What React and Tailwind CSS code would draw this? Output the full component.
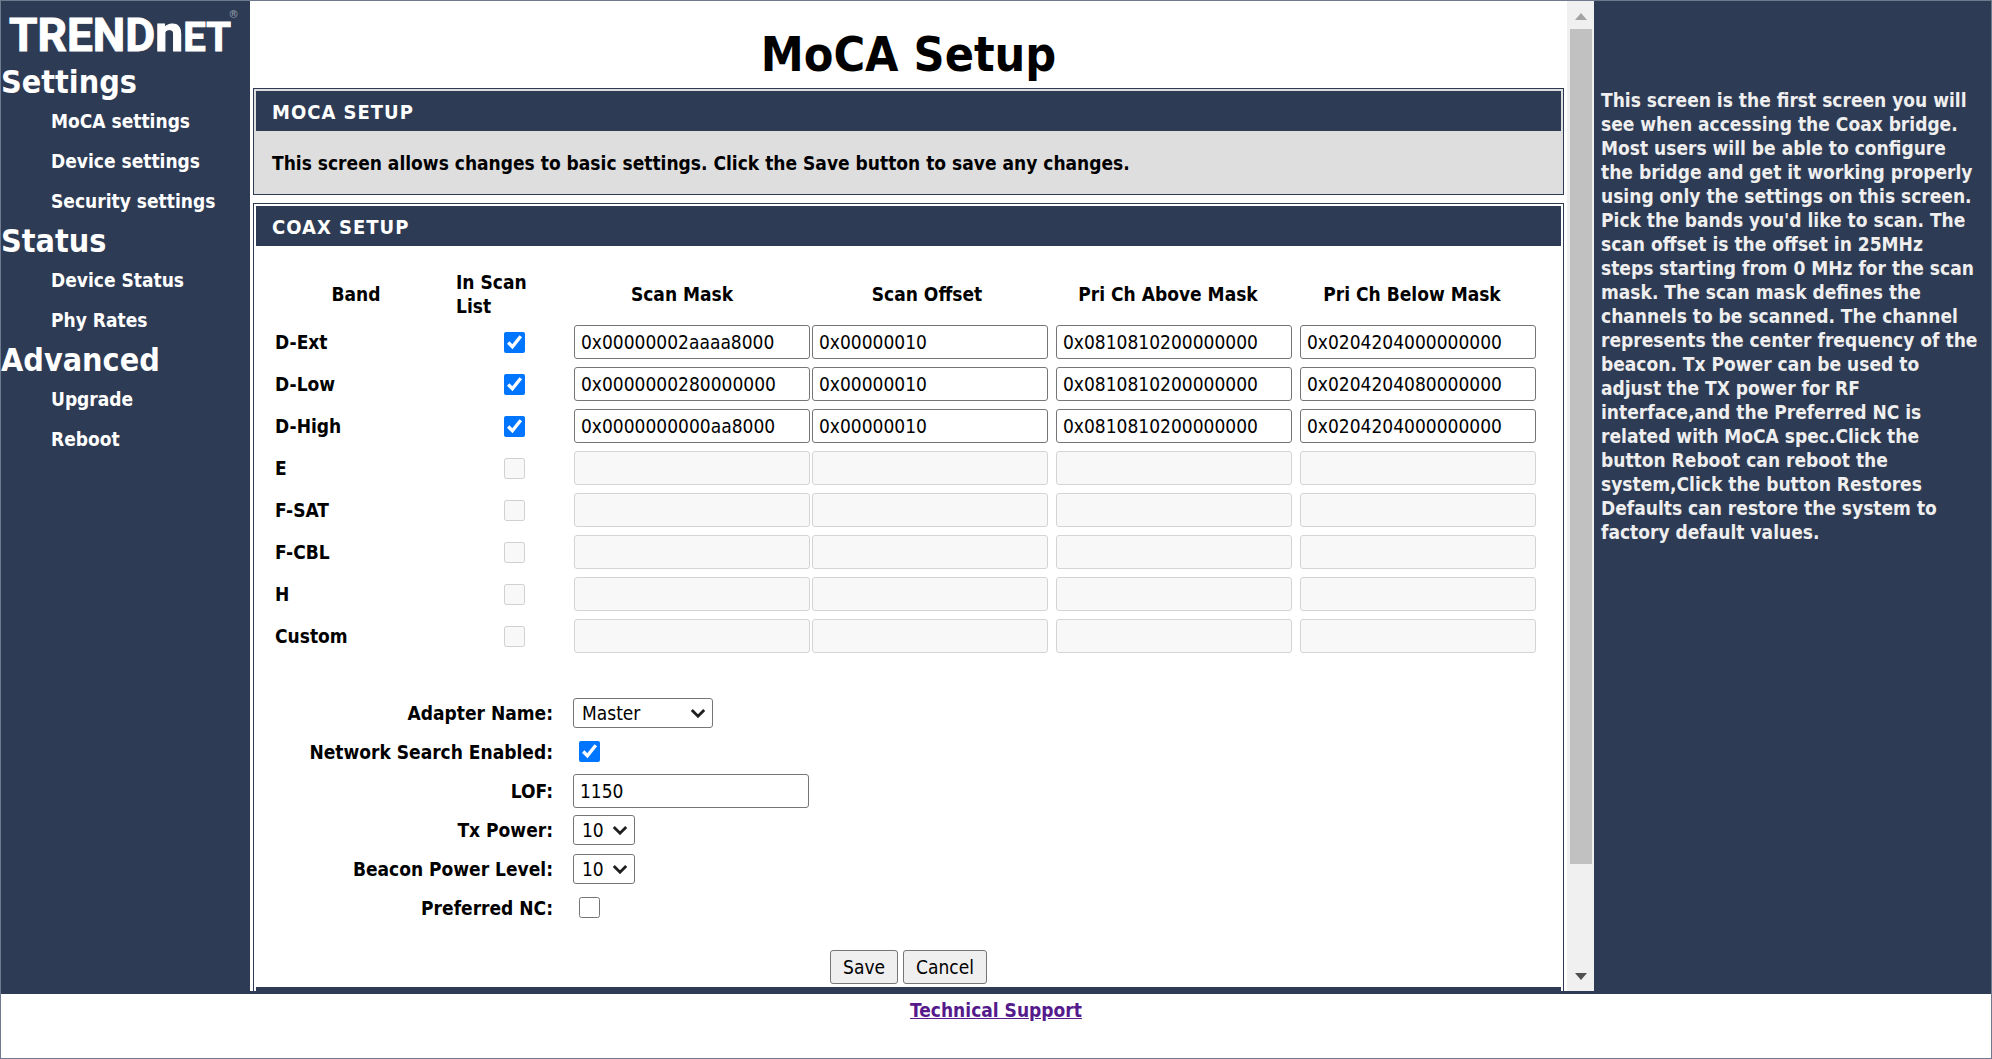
import clsx from "clsx";

const MENU = [
  { title: "Settings", items: ["MoCA settings", "Device settings", "Security settings"] },
  { title: "Status", items: ["Device Status", "Phy Rates"] },
  { title: "Advanced", items: ["Upgrade", "Reboot"] },
];

const COLUMNS = ["Scan Mask", "Scan Offset", "Pri Ch Above Mask", "Pri Ch Below Mask"];

const BANDS = [
  { name: "D-Ext", values: ["0x00000002aaaa8000", "0x00000010", "0x0810810200000000", "0x0204204000000000"] },
  { name: "D-Low", values: ["0x0000000280000000", "0x00000010", "0x0810810200000000", "0x0204204080000000"] },
  { name: "D-High", values: ["0x0000000000aa8000", "0x00000010", "0x0810810200000000", "0x0204204000000000"] },
  { name: "E" },
  { name: "F-SAT" },
  { name: "F-CBL" },
  { name: "H" },
  { name: "Custom" },
];

const HELP = `This screen is the first screen you will
see when accessing the Coax bridge.
Most users will be able to configure
the bridge and get it working properly
using only the settings on this screen.
Pick the bands you'd like to scan. The
scan offset is the offset in 25MHz
steps starting from 0 MHz for the scan
mask. The scan mask defines the
channels to be scanned. The channel
represents the center frequency of the
beacon. Tx Power can be used to
adjust the TX power for RF
interface,and the Preferred NC is
related with MoCA spec.Click the
button Reboot can reboot the
system,Click the button Restores
Defaults can restore the system to
factory default values.`;

function Logo() {
  return (
    <div className="relative flex h-[60px] items-baseline pl-2 font-['Roboto'] font-bold leading-[66px] [-webkit-text-stroke:1px_white]">
      <span className="text-[46px]">TREND</span>
      <span className="text-[50px]">n</span>
      <span className="text-[40px]">ET</span>
      <span className="absolute top-2 right-3 text-[11px] leading-3 text-[#8f98a8] [-webkit-text-stroke:0]">®</span>
    </div>
  );
}

function Sidebar() {
  return (
    <nav className="w-[249px] shrink-0 bg-[#2e3b54] text-white">
      <Logo />
      {MENU.map((group) => (
        <div key={group.title}>
          <h2 className="h-[39px] text-[32px] leading-[42px] font-bold">{group.title}</h2>
          <ul className="pl-[50px]">
            {group.items.map((item) => (
              <li key={item} className="h-[40px] leading-[42px]">
                <a href="#">{item}</a>
              </li>
            ))}
          </ul>
        </div>
      ))}
    </nav>
  );
}

function TextBox({ className, ...props }) {
  return (
    <input
      type="text"
      className={clsx(
        "block h-[34px] w-[236px] rounded-[3px] border border-[#767676] bg-white px-1.5 text-[19px] font-normal text-black disabled:border-[#d4d4d4] disabled:bg-[#f8f8f8]",
        className,
      )}
      {...props}
    />
  );
}

function Picker({ id, options, className }) {
  return (
    <span className={clsx("relative block h-[30px]", className)}>
      <select
        id={id}
        className="h-full w-full appearance-none rounded-[3px] border border-[#767676] bg-white pl-2 text-[19px] font-normal text-black"
      >
        {options.map((o) => (
          <option key={o}>{o}</option>
        ))}
      </select>
      <svg viewBox="0 0 14 9" className="pointer-events-none absolute top-[11px] right-2 h-[9px] w-[14px]">
        <path d="M0.8 1 L7 7.2 L13.2 1" fill="none" stroke="#1f1f1f" strokeWidth="2.8" />
      </svg>
    </span>
  );
}

function Panel({ title, className, children }) {
  return (
    <section className={clsx("border border-[#2e3b54] p-0.5", className)}>
      <h2 className="h-[40px] bg-[#2e3b54] pl-4 text-[20px] leading-[42px] font-bold tracking-wider text-white uppercase">
        {title}
      </h2>
      {children}
    </section>
  );
}

function BandTable() {
  return (
    <table className="mt-[21px] ml-[18px] table-fixed border-collapse">
      <colgroup>
        <col className="w-[164px]" />
        <col className="w-[120px]" />
        <col className="w-[252px]" />
        <col className="w-[238px]" />
        <col className="w-[244px]" />
        <col className="w-[244px]" />
      </colgroup>
      <thead>
        <tr className="h-[54px]">
          <th>Band</th>
          <th className="pr-6 pl-[18px] text-left">In Scan List</th>
          {COLUMNS.map((c) => (
            <th key={c} className="pr-1">{c}</th>
          ))}
        </tr>
      </thead>
      <tbody>
        {BANDS.map(({ name, values }) => (
          <tr key={name} className="h-[42px]">
            <th scope="row" className="pl-px text-left">{name}</th>
            <td className="pl-[66px]">
              <input
                type="checkbox"
                aria-label={`${name} in scan list`}
                defaultChecked={Boolean(values)}
                disabled={!values}
                className="block size-[21px]"
              />
            </td>
            {COLUMNS.map((c, i) => (
              <td key={c}>
                <TextBox aria-label={`${name} ${c}`} defaultValue={values?.[i]} disabled={!values} className="ml-auto" />
              </td>
            ))}
          </tr>
        ))}
      </tbody>
    </table>
  );
}

function Field({ id, label, children }) {
  return (
    <div className="flex h-[39px] items-center gap-5">
      <label htmlFor={id} className="w-[297px] text-right">{label}</label>
      {children}
    </div>
  );
}

function ScrollBar() {
  return (
    <div className="flex w-[27px] shrink-0 flex-col items-center bg-[#f0f0f0]">
      <svg viewBox="0 0 12 7" className="mt-3 mb-[9px] h-[7px] w-3">
        <path d="M0 7 L6 0 L12 7 Z" fill="#a3a3a3" />
      </svg>
      <div className="min-h-0 w-[22px] flex-[835] bg-[#c1c1c1]" />
      <div className="min-h-0 flex-[109]" />
      <svg viewBox="0 0 12 7" className="mb-[11px] h-[7px] w-3">
        <path d="M0 0 L6 7 L12 0 Z" fill="#505050" />
      </svg>
    </div>
  );
}

export default function App() {
  return (
    <div className="flex h-screen flex-col border border-[#6f7a8e] bg-[#2e3b54] font-['DejaVu_Sans_Condensed','DejaVu_Sans',sans-serif] text-[19px] leading-6 font-bold text-black">
      <div className="flex min-h-0 flex-1">
        <Sidebar />
        <div className="mb-[3px] flex min-w-0 flex-1 bg-white">
          <main className="min-w-0 flex-1 overflow-hidden pr-[3px] pl-[3px]">
            <h1 className="h-[87px] text-center text-[48px] leading-[106px]">MoCA Setup</h1>
            <Panel title="MoCA Setup" className="bg-[#dedede]">
              <p className="px-4 pt-5 pb-[17px]">
                This screen allows changes to basic settings. Click the Save button to save any changes.
              </p>
            </Panel>
            <Panel title="Coax Setup" className="mt-2">
              <BandTable />
              <form className="mt-9" onSubmit={(e) => e.preventDefault()}>
                <Field id="adapter" label="Adapter Name:">
                  <Picker id="adapter" options={["Master", "Slave"]} className="w-[140px]" />
                </Field>
                <Field id="search" label="Network Search Enabled:">
                  <input id="search" type="checkbox" defaultChecked className="ml-1.5 size-[21px]" />
                </Field>
                <Field id="lof" label="LOF:">
                  <TextBox id="lof" defaultValue="1150" />
                </Field>
                <Field id="tx" label="Tx Power:">
                  <Picker id="tx" options={["10"]} className="w-[62px]" />
                </Field>
                <Field id="beacon" label="Beacon Power Level:">
                  <Picker id="beacon" options={["10"]} className="w-[62px]" />
                </Field>
                <Field id="nc" label="Preferred NC:">
                  <input id="nc" type="checkbox" className="ml-1.5 size-[21px]" />
                </Field>
                <div className="mt-[23px] flex justify-center gap-[5px]">
                  {["Save", "Cancel"].map((b) => (
                    <button
                      key={b}
                      type="button"
                      className="h-[34px] rounded-[3px] border border-[#767676] bg-[#efefef] px-3 font-normal"
                    >
                      {b}
                    </button>
                  ))}
                </div>
              </form>
              <div className="mt-[3px] h-[40px] bg-[#2e3b54]" />
            </Panel>
          </main>
          <ScrollBar />
        </div>
        <aside className="w-[397px] shrink-0 pt-[87px] pl-[7px] text-[#efefef]">
          <p className="whitespace-pre-line">{HELP}</p>
        </aside>
      </div>
      <footer className="h-[64px] bg-white pt-1 text-center">
        <a href="#" className="text-[#551a8b] underline">Technical Support</a>
      </footer>
    </div>
  );
}
